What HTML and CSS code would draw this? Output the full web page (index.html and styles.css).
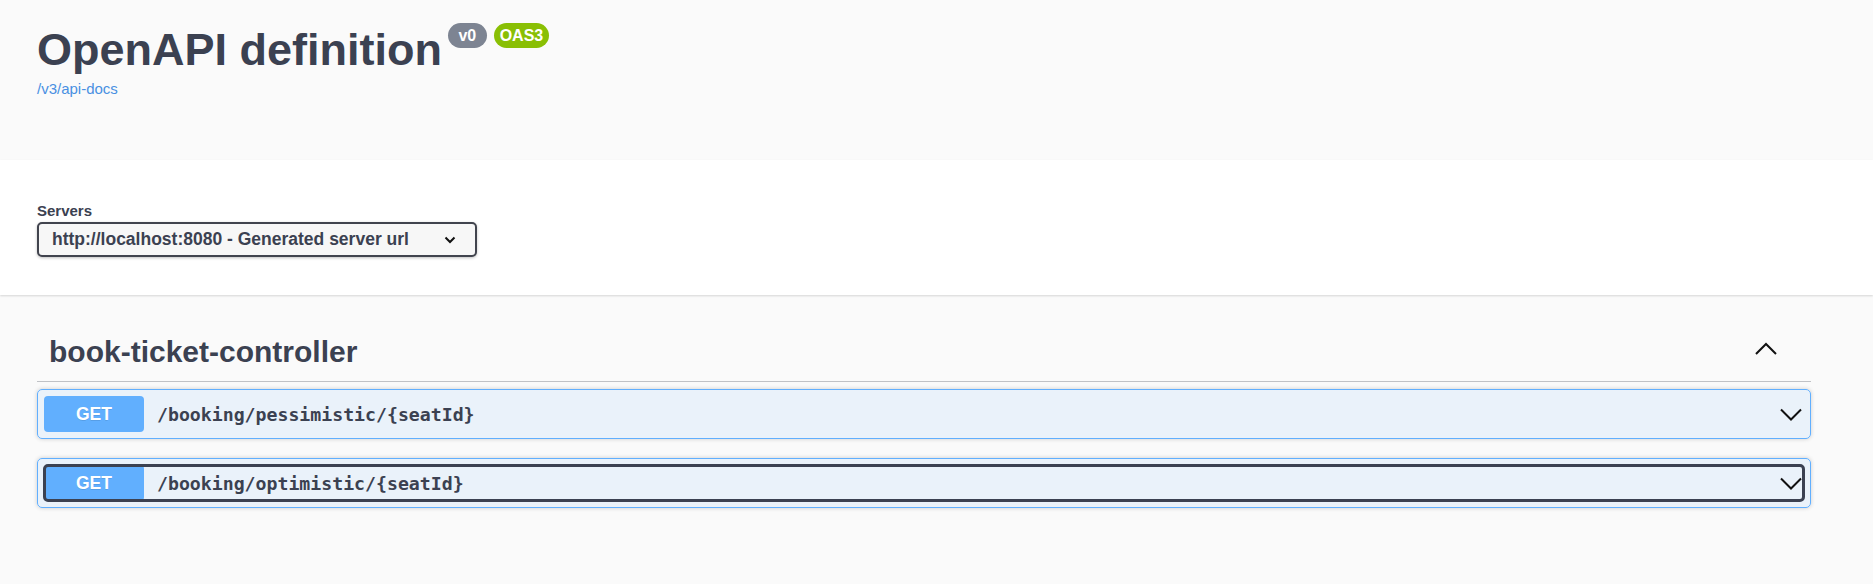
FILE: index.html
```html
<!DOCTYPE html>
<html lang="en">
<head>
<meta charset="utf-8">
<title>Swagger UI</title>
<link rel="stylesheet" href="styles.css">
</head>
<body>
  <section class="info-section">
    <div class="wrapper">
      <div class="title-row">
        <h2 class="title">OpenAPI definition</h2>
        <span class="badge badge-version"> v0 </span>
        <span class="badge badge-oas">OAS3</span>
      </div>
      <a class="base-link" href="#">/v3/api-docs</a>
    </div>
  </section>

  <section class="scheme-container">
    <div class="wrapper">
      <div class="servers">
        <span class="servers-title">Servers</span>
        <div class="server-select" role="combobox">
          <span>http://localhost:8080 - Generated server url</span>
          <svg class="select-arrow" width="12" height="8" viewBox="0 0 12 8" aria-hidden="true">
            <polyline points="1.5,1.5 6,6 10.5,1.5" fill="none" stroke="#111" stroke-width="2"/>
          </svg>
        </div>
      </div>
    </div>
  </section>

  <section class="operations">
    <div class="wrapper">
      <div class="tag-header">
        <h3 class="tag-title">book-ticket-controller</h3>
        <svg class="tag-arrow" width="22" height="13" viewBox="0 0 22 13" aria-hidden="true">
          <polyline points="1,12 11,2 21,12" fill="none" stroke="#111" stroke-width="2"/>
        </svg>
      </div>
      <div class="opblock-list">
        <div class="opblock">
          <div class="opblock-summary">
            <div class="summary-control">
              <span class="method">GET</span>
              <span class="path">/booking/pessimistic/{seatId}</span>
              <svg class="op-arrow" width="22" height="13" viewBox="0 0 22 13" aria-hidden="true">
                <polyline points="1,1.5 11,11.5 21,1.5" fill="none" stroke="#111" stroke-width="2"/>
              </svg>
            </div>
          </div>
        </div>
        <div class="opblock">
          <div class="opblock-summary">
            <div class="summary-control is-focused">
              <span class="method">GET</span>
              <span class="path">/booking/optimistic/{seatId}</span>
              <svg class="op-arrow" width="22" height="13" viewBox="0 0 22 13" aria-hidden="true">
                <polyline points="1,1.5 11,11.5 21,1.5" fill="none" stroke="#111" stroke-width="2"/>
              </svg>
            </div>
          </div>
        </div>
      </div>
    </div>
  </section>
</body>
</html>
```

FILE: styles.css
```css
html, body {
  margin: 0;
  padding: 0;
}

body {
  background: #fafafa;
  font-family: "Liberation Sans", Arial, sans-serif;
  color: #3b4151;
}

.wrapper {
  width: 1774px;
  margin-left: 12px;
  padding: 0 25px;
}

/* ---------- info header ---------- */
.info-section {
  height: 160px;
  box-sizing: border-box;
  padding-top: 24px;
}

.title-row {
  display: flex;
  align-items: flex-start;
}

.title {
  margin: 0;
  font-size: 45px;
  line-height: 52px;
  font-weight: 700;
  color: #3b4151;
}

.badge {
  margin-left: 6px;
  margin-top: -1px;
  padding: 3px 6px;
  border-radius: 57px;
  color: #fff;
  font-size: 16px;
  font-weight: 700;
  line-height: 19px;
  white-space: pre;
}

.badge-version {
  background: #7d8492;
}

.badge-oas {
  margin-left: 7px;
  background: #89bf04;
}

.base-link {
  display: inline-block;
  margin-top: 4px;
  font-size: 15px;
  line-height: 17px;
  color: #4990e2;
  text-decoration: none;
}

/* ---------- servers ---------- */
.scheme-container {
  background: #fff;
  box-shadow: 0 1px 2px 0 rgba(0, 0, 0, 0.15);
  padding: 42px 0 38px;
}

.servers {
  display: flex;
  flex-direction: column;
  align-items: flex-start;
  gap: 3px;
}

.servers-title {
  font-size: 15px;
  line-height: 17px;
  font-weight: 700;
}

.server-select {
  box-sizing: border-box;
  width: 440px;
  height: 35px;
  display: flex;
  align-items: center;
  justify-content: space-between;
  padding: 0 19px 0 13px;
  border: 2px solid #41444e;
  border-radius: 5px;
  background: #f7f7f7;
  box-shadow: 0 1px 3px rgba(0, 0, 0, 0.25);
  font-size: 17.5px;
  font-weight: 700;
  color: #3b4151;
}

.select-arrow {
  display: block;
  margin-top: 1px;
}

/* ---------- operations ---------- */
.operations {
  margin-top: 25px;
}

.tag-header {
  display: flex;
  align-items: center;
  justify-content: space-between;
  padding: 14px 34px 12px 12px;
  border-bottom: 1px solid rgba(59, 65, 81, 0.3);
}

.tag-title {
  margin: 0;
  font-size: 30px;
  line-height: 35px;
  font-weight: 700;
  color: #3b4151;
}

.tag-arrow {
  display: block;
  margin-bottom: 6px;
}

.opblock-list {
  padding-top: 7px;
}

.opblock {
  border: 1px solid #61affe;
  border-radius: 5px;
  background: rgba(97, 175, 254, 0.1);
  box-shadow: 0 0 4px rgba(0, 0, 0, 0.19);
  margin-bottom: 19px;
}

.opblock-summary {
  padding: 6px;
}

.summary-control {
  display: flex;
  align-items: center;
  height: 36px;
  border-radius: 4px;
}

.summary-control.is-focused {
  outline: 3px solid #3b4151;
  outline-offset: -2px;
}

.method {
  flex: none;
  width: 100px;
  height: 36px;
  display: flex;
  align-items: center;
  justify-content: center;
  background: #61affe;
  border-radius: 4px;
  color: #fff;
  font-size: 17.5px;
  font-weight: 700;
  text-shadow: 0 1px 0 rgba(0, 0, 0, 0.1);
}

.path {
  flex: 1;
  padding: 0 13px;
  font-family: "DejaVu Sans Mono", "Liberation Mono", monospace;
  font-size: 18.2px;
  font-weight: 700;
  color: #3b4151;
}

.op-arrow {
  display: block;
  flex: none;
  margin-right: 2px;
}
```
